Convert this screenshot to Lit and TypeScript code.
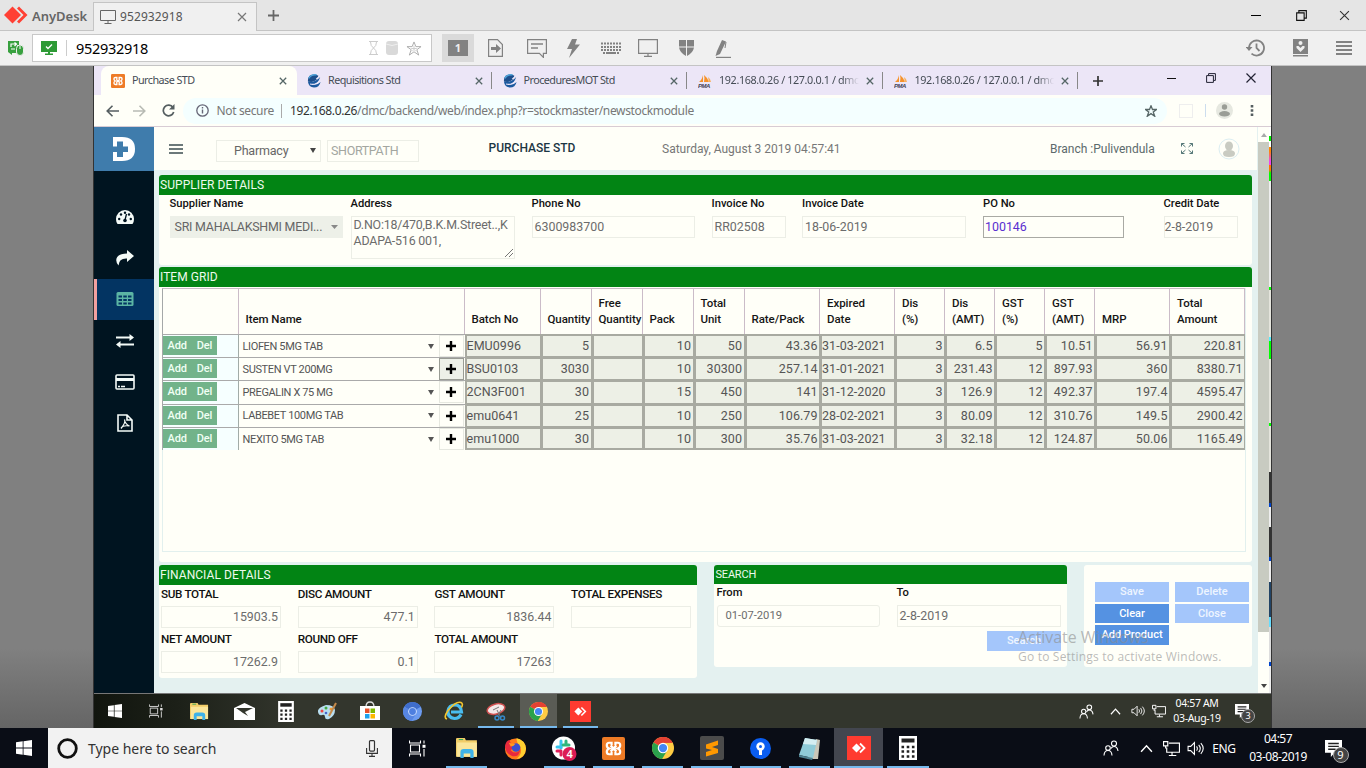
import { LitElement, html, svg, css } from "lit";
import { customElement } from "lit/decorators.js";
import { classMap } from "lit/directives/class-map.js";

const ico = (w: number, h: number, vb: string, body: unknown) =>
  html`<svg class="ico" width=${w} height=${h} viewBox=${vb} fill="none">${body}</svg>`;

const cross = (s = 8, c = "#566", w = 1.6) =>
  ico(s, s, "0 0 10 10", svg`<path d="M1 1l8 8M9 1l-8 8" stroke=${c} stroke-width=${w} />`);
const plus = (s: number, c: string, w: number) =>
  ico(s, s, "0 0 10 10", svg`<path d="M5 0v10M0 5h10" stroke=${c} stroke-width=${w} />`);
const restore = (s: number) =>
  ico(s, s, "0 0 10 10", svg`<path d="M.6 2.6h6.8v6.8H.6zM2.6 2.4V.6h6.8v6.8H7.6" stroke="#111" stroke-width="1" />`);
const minimise = ico(10, 10, "0 0 10 10", svg`<path d="M0 5.5h10" stroke="#000" />`);
const winLogo = (s: number) =>
  ico(s, s, "0 0 16 16", svg`<path d="M0 2.3 6.7 1.3V7.6H0zM7.5 1.2 16 0V7.6H7.5zM0 8.4H6.7V14.7L0 13.7zM7.5 8.4H16V16L7.5 14.8z" fill="#fff" />`);
const taskView = (s: number, c = "#fff") =>
  ico(s, s, "0 0 17 16", svg`<path d="M.5 0v2.5h11V0M.5 16v-2.5h11V16M1.5 4.5h9v7h-9zM15 0v3M15 8.5V16" stroke=${c} stroke-width="1.1" /><path d="M13.5 4.3h3v3h-3z" fill=${c} />`);
const folder = (w: number) =>
  ico(w, w, "0 0 20 20", svg`<path d="M0 2q0-1 1-1h7l1 2h10v15H0z" fill="#f2cd68" /><path d="M1 5h18v13H1z" fill="#fbe69a" /><path d="M2.5 2.3h4" stroke="#3aa857" stroke-width="1" /><path d="M4 19v-5q0-3 3-3h6q3 0 3 3v5h-3v-4H7v4z" fill="#3fb2e8" />`);
const calc = (w: number, h: number) =>
  ico(w, h, "0 0 18 24", svg`<path d="M0 0h18v24H0z" fill="#fff" /><path d="M2.5 2.5h13v4h-13z" fill="#222" /><path d="M2.5 11h13M2.5 15.5h13M2.5 20.500h13" stroke="#222" stroke-width="2.6" stroke-dasharray="2.6 2.6" />`);
const chrome = (s: number) =>
  ico(s, s, "0 0 24 24", svg`<circle cx="12" cy="12" r="12" fill="#fc4" /><path d="M12 12 1.600 6A12 12 0 0 1 22.400 6z" fill="#e34133" /><path d="M12 12 1.600 6A12 12 0 0 0 11 24l5.500-9z" fill="#2ba24c" /><path d="M12 6.300h10.500L23 9 14 17z" fill="#fc4" /><path d="M12 0A12 12 0 0 1 22.500 6.300H12z" fill="#e34133" /><circle cx="12" cy="12" r="5.700" fill="#fff" /><circle cx="12" cy="12" r="4.500" fill="#4487f4" />`);
const chromium = ico(19, 19, "0 0 24 24", svg`<circle cx="12" cy="12" r="12" fill="#6c9bf0" /><path d="M12 12 1.600 6A12 12 0 0 1 22.400 6z" fill="#3f6dcc" /><path d="M12 12 1.600 6A12 12 0 0 0 11 24l5.500-9z" fill="#5786e2" /><circle cx="12" cy="12" r="5.500" fill="#cfe0ff" /><circle cx="12" cy="12" r="4.300" fill="#4e7fe0" />`);
const anydesk = (s: number) =>
  ico(s, s, "0 0 24 24", svg`<path d="M0 0h24v24H0z" fill="#ff3b30" /><path d="M5 12l4.500-4.500L14 12l-4.500 4.500z" fill="#fff" /><path d="M13 7.500l4.500 4.500-4.500 4.500" stroke="#fff" stroke-width="1.800" />`);
const xampp = (s: number) =>
  ico(s, s, "0 0 24 24", svg`<rect width="24" height="24" rx="2" fill="#ee7b26" /><path d="M10 8.500V6H7.500Q5 6 5 8.500T7.500 12Q5 13 5 15.500T7.500 18H10v-2.500M14 8.500V6h2.500Q19 6 19 8.500T16.500 12Q19 13 19 15.500T16.500 18H14v-2.500M9 9l6 6M15 9l-6 6" stroke="#fff" stroke-width="2.300" />`);
const people = (s: number) =>
  ico(s, s, "0 0 16 16", svg`<circle cx="11" cy="3.500" r="2.500" stroke="#fff" stroke-width="1.100" /><circle cx="5" cy="8" r="2.300" stroke="#fff" stroke-width="1.100" /><path d="M8 8.500Q9 6.500 11 6.500q3.300 0 4 4.500M1 15.500q.3-5 4-5t4 5" stroke="#fff" stroke-width="1.100" />`);
const chevron = (s: number) => ico(s, s, "0 0 12 12", svg`<path d="M1 9l5-5.500L11 9" stroke="#fff" stroke-width="1.300" />`);
const speaker = (s: number) =>
  ico(s, s, "0 0 16 16", svg`<path d="M1 6h2.500L7 2.500v11L3.500 10H1zM9 6q1.500 2 0 4M11 4.500q3 3.500 0 7M13 3q4.500 5 0 10" stroke="#fff" stroke-width="1" />`);
const network = (s: number) =>
  ico(s, s, "0 0 16 16", svg`<path d="M5.500 3H15.500V11.500H3.500V7M8.500 12v2.500M5.500 14.600h7" stroke="#fff" stroke-width="1.100" /><path d="M.5 1.500h4v4h-4zM2.500 5.500V8" stroke="#fff" stroke-width="1.100" />`);
const note = (s: number) =>
  ico(s, s, "0 0 16 16", svg`<path d="M0 0h16v12H9l-3.500 4v-4H0z" fill="#fff" /><path d="M3 3.300h10M3 6h10M3 8.700h7" stroke="#222" stroke-width="1.200" />`);
const swirl = ico(14, 14, "0 0 16 16", svg`<path d="M3 2q5-3 10 0-1 6-8 7-4 0-4-1Q1 4 3 2z" fill="#1d4f8c" /><path d="M2 5Q5 0 11 1" stroke="#4fa3d8" stroke-width="1.600" /><path d="M10 5.500l5-4.500v6z" fill="#ece6f7" /><path d="M1 8.500q8 2 14-5-2 8-9 8.500 5 1.500 9.500-3Q14 15.500 8 15.500 2 15 1 8.500z" fill="#1c5a9f" /><path d="M3.500 11.500q7 1.500 11-3.500" stroke="#ece6f7" stroke-width="1.300" />`);
const pma = ico(14, 14, "0 0 14 14", svg`<path d="M5 8V1q-1 5-4 7zM6 8q1-4 0-7 4 3 5 7z" fill="#f6922a" /><path d="M10 8q1-2 0-5 3 2 3 5z" fill="#f8b15e" /><text x="0" y="13.500" class="pma">PMA</text>`);
const plug = (d: unknown) => ico(18, 18, "0 0 18 18", d);

const fields = [
  ["Supplier Name", "SRI MAHALAKSHMI MEDI...", "pick"],
  ["Address", "", "area"],
  ["Phone No", "6300983700", "w163"],
  ["Invoice No", "RR02508", "w73"],
  ["Invoice Date", "18-06-2019", "w164"],
  ["PO No", "100146", "po"],
  ["Credit Date", "2-8-2019", "w73 tight"],
];
const heads = ["", "Item Name", "Batch No", "Quantity", "Free\nQuantity", "Pack", "Total\nUnit", "Rate/Pack", "Expired\nDate", "Dis\n(%)", "Dis\n(AMT)", "GST\n(%)", "GST\n(AMT)", "MRP", "Total\nAmount"];
const rows = [
  ["LIOFEN 5MG TAB", "EMU0996", "5", "", "10", "50", "43.36", "31-03-2021", "3", "6.5", "5", "10.51", "56.91", "220.81"],
  ["SUSTEN VT 200MG", "BSU0103", "3030", "", "10", "30300", "257.14", "31-01-2021", "3", "231.43", "12", "897.93", "360", "8380.71"],
  ["PREGALIN X 75 MG", "2CN3F001", "30", "", "15", "450", "141", "31-12-2020", "3", "126.9", "12", "492.37", "197.4", "4595.47"],
  ["LABEBET 100MG TAB", "emu0641", "25", "", "10", "250", "106.79", "28-02-2021", "3", "80.09", "12", "310.76", "149.5", "2900.42"],
  ["NEXITO 5MG TAB", "emu1000", "30", "", "10", "300", "35.76", "31-03-2021", "3", "32.18", "12", "124.87", "50.06", "1165.49"],
];
const money = [
  ["SUB TOTAL", "15903.5"], ["DISC AMOUNT", "477.1"], ["GST AMOUNT", "1836.44"], ["TOTAL EXPENSES", ""],
  ["NET AMOUNT", "17262.9"], ["ROUND OFF", "0.1"], ["TOTAL AMOUNT", "17263"],
];

@customElement("app-root")
export class AppRoot extends LitElement {
  static styles = css`
    :host { display: flex; flex-direction: column; width: 1366px; height: 768px; overflow: hidden; font-family: "Noto Sans", "Open Sans", sans-serif; color: #222; }
    * { box-sizing: border-box; }
    .ico { display: block; flex: none; }
    .pma { font: italic bold 6px "Liberation Sans", sans-serif; fill: #445; }
    .r { display: flex; align-items: center; white-space: nowrap; }
    .g { display: grid; align-items: center; white-space: nowrap; }
    .c { justify-self: center; }

    .title { height: 31px; background: #e5e5e5; border-bottom: 1px solid #c4c4c4; grid-template-columns: 30px 63px 164px 32px 942px 49px 42px 44px; flex: none; }
    .title > .ico { justify-self: center; }
    .title > .logo { margin-left: 1px; }
    .brand { font-weight: 600; font-size: 13px; color: #666; letter-spacing: -.02px; padding: 1px 0 0 2px; }
    .tab { align-self: end; height: 29px; margin-bottom: -1px; background: #f0f0f0; border: 1px solid #c4c4c4; border-bottom: 0; padding: 0 9px 1px 6px; font-size: 12px; letter-spacing: .1px; color: #555; gap: 4px; }
    .tab span { flex: 1; }
    .tools { height: 35px; background: #f0f0f0; border-bottom: 1px solid #c4c4c4; grid-template-columns: 32px 400px 10px 32px 43px 39px 35px 39px 36px 40px 34px 491px 48px 42px 45px; flex: none; }
    .tools > .ico { justify-self: center; }
    .addr { height: 28px; background: #fff; border: 1px solid #c8c8c8; padding: 0 9px 0 8px; gap: 8px; font-size: 14.500px; color: #000; letter-spacing: -.3px; }
    .addr b { width: 1px; height: 16px; background: #ccc; margin: 0 1px; }
    .addr span { flex: 1; }
    .one { height: 28px; background: #dadada; display: grid; place-items: center; }
    .one b { width: 20px; height: 16px; background: #828282; color: #eee; font-size: 11px; line-height: 16px; text-align: center; }

    .stage { height: 662px; flex: none; display: grid; grid-template-columns: 93px 1179px 94px; background: linear-gradient(#808080 88%, #656565); }
    .remote { grid-column: 2; border: solid #333; border-width: 0 1px; display: flex; flex-direction: column; overflow: hidden; }
    .tabs { height: 29px; background: #ece6f7; grid-template-columns: 7px 196px repeat(4, 195.500px) 38px 36px 38px 40px 40px; font-size: 10.800px; color: #454c55; flex: none; letter-spacing: -.55px; }
    .tabs > .ico { justify-self: center; }
    .tabs > .up { margin-bottom: 5px; }
    .bt { height: 29px; padding: 0 10px 0 10px; gap: 7px; }
    .bt.on { background: #fffff8; border-radius: 8px 8px 0 0; }
    .bt span { flex: 1; overflow: hidden; padding-bottom: 2px; }
    .bt:not(.on) b { width: 1px; height: 17px; background: #888; margin: 0 -9px 0 1px; }
    .bt.narrow span { max-width: 140px; letter-spacing: -.38px; -webkit-mask-image: linear-gradient(90deg, #000 88%, transparent); mask-image: linear-gradient(90deg, #000 88%, transparent); }
    .nav { height: 32px; background: #fffff8; border-bottom: 1px solid #d8ccd4; grid-template-columns: 5px 27px 27px 30px 984px 38px 6px 26px 30px; font-size: 12px; color: #777; flex: none; }
    .nav > .ico { justify-self: center; }
    .omni { height: 26px; border-radius: 13px; background: #f4ffff; padding: 0 10px 0 13px; gap: 7.500px; letter-spacing: -.36px; }
    .omni b { width: 1px; height: 14px; background: #aaa; }
    .omni .url { flex: 1; }
    .omni i { font-style: normal; color: #333; }
    .extbox { width: 14px; height: 14px; border: 1px solid #eee; justify-self: center; }
    .nsep { width: 1px; height: 13px; background: #cde; }

    .app { height: 566px; flex: none; display: grid; grid-template-columns: 60px 1104px 11px 2px; font-family: Roboto, sans-serif; background: #fffff8; }
    .side { background: #001420; display: flex; flex-direction: column; }
    .dlogo { height: 44px; background: #3f7cac; display: grid; place-items: center; margin-bottom: 25.500px; }
    .si { height: 41.200px; display: grid; place-items: center; padding-left: 2px; }
    .si.on { background: #033462; border-left: 3px solid #f2a0a0; padding: 0 1px 1px 0; }
    .scroll { display: flex; flex-direction: column; align-items: center; padding-top: 6px; }
    .thumb { width: 11px; height: 490px; background: #c8cbc1; margin: 4px 0 52px; }
    .noise { background: linear-gradient(#fff 0 9px, #0e0 9px 14px, #fff 14px 20px, #f80 20px 24px, #e4e 34px 38px, #f70 38px 43px, #0f0 46px 54px, #eee 54px 160px, #0f0 160px 163px, #e4e4dc 163px 210px, #5ef 210px 214px, #0f0 214px 232px, #e4e4dc 232px 296px, #0f0 296px 299px, #e4e4dc 299px 345px, #333 345px 376px, #04c 376px 380px, #eee 380px 400px, #333 400px 430px, #04c 430px 434px, #eee 434px 455px, #246 455px 490px, #6df 490px 500px, #ddd 500px 535px, #04c 535px 539px, #eee 539px); }
    .main { background: #e4f1f0; display: flex; flex-direction: column; padding-right: 1px; }
    .top { height: 43px; background: #fffff8; grid-template-columns: 62px 111px 160.500px 174.500px 388px 116.500px 41px 42.500px; font-size: 12px; color: #777; flex: none; }
    .top > .ico { justify-self: center; }
    .top > .menu { justify-self: start; margin-left: 15px; }
    .branch { color: #5c6a6c; }
    .bx { height: 22px; border: 1px solid #eceee6; margin-top: 4px; }
    .sel { width: 105px; padding: 0 4px 0 17px; justify-content: space-between; color: #666; font-size: 12.500px; letter-spacing: -.2px; }
    .short { width: 92px; padding-left: 3px; color: #a3a6a0; font-size: 12.500px; letter-spacing: -.35px; }
    .ttl { color: #1b3644; font-weight: 500; font-size: 12px; padding: 0 0 1px 1px; }
    .body { padding: 4.500px 5px 0 4.500px; display: flex; flex-direction: column; }
    .panel { background: #fffff8; border-radius: 3px; }
    .hd { height: 20.500px; line-height: 20px; background: #028414; color: #eefaee; font-size: 12px; padding-left: 1.500px; border-radius: 3px 3px 0 0; letter-spacing: .06px; }
    .sup { height: 90px; margin-bottom: 2px; }
    .fg { display: grid; grid-template-columns: 181px 181px 180px 90.500px 181px 180.500px 80px; padding-left: 11px; align-items: start; }
    label { display: block; font-size: 11.200px; font-weight: 500; color: #111; line-height: 14px; white-space: nowrap; }
    .fg label { margin: 1.500px 0 5px; }
    .in { height: 22px; border: 1px solid #eceee6; font-size: 12.400px; color: #6c6c6c; padding: 0 2px; line-height: 19.500px; }
    .w163 { width: 163px; } .w73 { width: 74px; } .w164 { width: 164px; }
    .w73.tight { padding: 0; }
    .po { width: 141px; border-color: #a9aaa4; color: #5a2fd0; padding-left: 1px; }
    .pick { width: 173px; background: #edf0e8; border: 0; padding: 0 5px; display: flex; align-items: center; justify-content: space-between; color: #666; letter-spacing: -.22px; }
    .area { width: 164px; height: 43px; line-height: 16.800px; position: relative; letter-spacing: -.18px; white-space: pre; }
    .area .ico { position: absolute; right: 1px; bottom: 1px; }
    .grid { height: 295.500px; margin-bottom: 2.500px; }
    .tb { margin: 1px 0 0 3px; width: 1084px; height: 263.500px; border: 1px solid #e2f0ee; border-top: 0; }
    .tr { display: grid; grid-template-columns: 76px 226px 76px 51px 51px 51px 51px 75.500px 75px 50px 50px 50px 50px 75px 75px; }
    .th { height: 46px; border-top: 1px solid #c8bcc6; border-left: 1px solid #a5a8a8; align-items: stretch; margin-left: -1px; width: 1083.500px; }
    .th div { border-right: 1px solid #cbbcc8; font-size: 11.500px; font-weight: 500; color: #161616; white-space: pre; line-height: 15.700px; padding: 0 0 6.500px 7px; display: flex; align-items: flex-end; letter-spacing: -.05px; }
    .td { height: 23.200px; border-left: 1px solid #a5a8a8; margin-left: -1px; width: 1083.500px; }
    .lead { border-top: 1px solid #aaa; border-right: 1px solid #a2aca8; background: #f6ffff; padding-top: 1px; display: flex; }
    .ad { height: 19px; width: 54px; background: #72b38a; color: #f0fff4; font-size: 11px; font-weight: 500; line-height: 19px; padding-left: 5px; display: flex; gap: 10px; letter-spacing: -.15px; }
    .item { border-top: 1px solid #aaa; font-size: 11px; letter-spacing: -.36px; color: #555; display: grid; grid-template-columns: 1fr 13px 25px; align-items: center; padding: 0 1px 0 4px; }
    .item .ico { justify-self: center; }
    .item > .ico { justify-self: start; margin-left: 2px; }
    .pl { height: 22px; display: grid; place-items: center; border: 1px solid #e6e8e0; }
    .pl.f { background: #edf0e8; border-color: #999c94; }
    .cell { background: #edf0e6; border: solid #a8aaa1; border-width: 2px 1px 1px 2px; font-size: 12.500px; line-height: 19.500px; color: #555; text-align: right; padding-right: 1.500px; letter-spacing: .05px; }
    .cell.l { text-align: left; padding-left: 0; }
    .td:last-child .cell { border-bottom-width: 2px; }
    .low { display: grid; grid-template-columns: 538.500px 353px 168px; gap: 17px; align-items: start; }
    .fin { height: 113px; }
    .fin .fl { display: grid; grid-template-columns: repeat(3, 136.700px) 120px; padding-left: 2.500px; }
    .fin label { margin: 2px 0 5px; font-size: 11.700px; letter-spacing: -.32px; }
    .fin .in { width: 120px; text-align: right; margin-bottom: 2px; }
    .srch { height: 102px; }
    .srch .hd { height: 19px; font-size: 11px; line-height: 19px; letter-spacing: -.2px; }
    .srch .fl { display: grid; grid-template-columns: 180px 164px; padding-left: 2.500px; }
    .srch label { margin: 2px 0 5.500px; }
    .srch .in { width: 164px; }
    .srch .in.sm { font-size: 11.200px; padding-left: 8px; border-radius: 3px; width: 163px; }
    .btn { height: 19.500px; width: 74px; background: #a4c6fb; color: #eef5ff; font-size: 11px; font-weight: 500; line-height: 19px; text-align: center; white-space: nowrap; }
    .btn.dk { background: #5592e2; color: #fff; }
    .srch .btn { margin: 4px 0 0 273px; }
    .acts { height: 102px; display: grid; grid-template-columns: 74px 74px; gap: 2px 6px; align-content: start; padding: 17.500px 0 0 11px; }
    .wm { position: absolute; left: 1018px; top: 626px; color: #8c8c8c99; font: 15.900px/23px "Open Sans", sans-serif; }
    .wm p { margin: 0; font-size: 12px; line-height: 15px; letter-spacing: .2px; }

    .rtask { height: 35px; background: linear-gradient(90deg, #11150e 0, #1c2018 7%, #33362d 17%); border-top: 1px solid #777; grid-template-columns: 41px 41px 47px 42px 42px 42px 42px 42px 42px 42px 43px 41px 468px 34px 25px 20px 22px 54px 36px; flex: none; color: #fff; font-size: 10.500px; }
    .slot { height: 100%; display: grid; place-items: center; }
    .slot.u { border-bottom: 2px solid #76b9ed; padding-top: 2px; margin: 0 3px; }
    .slot.sel2 { background: #5a5c55; }
    .clock { text-align: center; line-height: 15px; letter-spacing: -.35px; }
    .nt { justify-self: center; position: relative; }
    .badge { position: absolute; left: 6px; top: 5px; width: 14px; height: 14px; border-radius: 50%; background: #444; border: 1px solid #aaa; color: #fff; font-size: 9px; line-height: 12px; text-align: center; letter-spacing: 0; }
    .htask { height: 40px; background: #0a0d16; color: #fff; grid-template-columns: 48px 344px 50px repeat(9, 49px) 50px 157px 42px 28px 22px 26px 32px 76px 34px; font-size: 12px; flex: 1; }
    .htask .slot.u { margin: 0 4px; }
    .htask .slot.sel2 { background: #43464f; margin: 0; }
    .htask .clock { line-height: 18.500px; letter-spacing: -.5px; }
    .htask .badge { width: 16px; height: 16px; line-height: 14px; font-size: 11px; top: 7px; left: 8px; }
    .eng { letter-spacing: -.4px; }
    .find { height: 40px; background: #f2f2f2; color: #333; font-size: 14px; letter-spacing: -.03px; padding: 0 14px 0 9px; gap: 10px; }
    .find span { flex: 1; }
  `;

  private header() {
    return html`
      <div class="g title">
        <svg class="ico logo" width="24" height="18" viewBox="0 0 24 18"><path d="M0 9l8.500-8.500L17 9l-8.500 8.500z" fill="#ff4034" /><path d="M13 2.500l2-2L23.500 9 15 17.500l-2-2L19.500 9z" fill="#ff4034" /></svg>
        <div class="brand">AnyDesk</div>
        <div class="r tab">${ico(16, 14, "0 0 16 14", svg`<path d="M.5.5h15v10H.5zM8 10.500V13M4.500 13.500h7" stroke="#666" />`)}<span>952932918</span>${cross(10, "#777", 1.2)}</div>
        ${plus(11, "#666", 1.6)}<i></i>${minimise}${restore(11)}${cross(11, "#333", 1)}
      </div>
      <div class="g tools">
        ${ico(16, 16, "0 0 16 16", svg`<path d="M0 1h11v4H9v8H4v2l-4-3z" fill="#38a03f" /><path d="M3 7V4h5M6.500 2.500 8.500 4l-2 2M3 9h4" stroke="#fff" stroke-width="1.200" /><rect x="8.500" y="5" width="7" height="10.500" rx="3.500" fill="#38a03f" stroke="#eee" /><path d="M12 6v3" stroke="#fff" />`)}
        <div class="r addr">${ico(16, 14, "0 0 16 14", svg`<path d="M0 0h16v11H9v1.500h3V14H4v-1.500h3V11H0z" fill="#2d9a35" /><path d="M5 5.500 7 7.500l4-4" stroke="#fff" stroke-width="1.300" />`)}<b></b><span>952932918</span>
          ${ico(9, 14, "0 0 9 14", svg`<path d="M0 .5h9M0 13.500h9M1.500 1q0 4 3 6 3-2 3-6M1.500 13q0-4 3-6 3 2 3 6" stroke="#ccc" />`)}
          ${ico(12, 14, "0 0 12 14", svg`<rect width="12" height="14" rx="3" fill="#d9d9d9" /><path d="M0 3q6 3 12 0" stroke="#eee" />`)}
          ${ico(16, 15, "0 0 16 16", svg`<path d="M8 1l2 5h5.500L11 9.300l2 5.700-5-3.500L3 15l2-5.700L.5 6H6z" stroke="#aaa" /><path d="M8 5v4M5 8h6M6 11l2-2 2 2" stroke="#ccc" />`)}
        </div><i></i>
        <div class="one"><b>1</b></div>
        ${ico(15, 18, "0 0 15 18", svg`<path d="M.6.600H9.500L14.400 5.500V17.400H.6z" stroke="#828282" stroke-width="1.200" /><path d="M3 8h5V5l5 4.500-5 4.500v-3H3z" fill="#828282" />`)}
        ${ico(20, 19, "0 0 20 19", svg`<path d="M.6.600h18.800v13.800h-3v4l-4-4H.6z" stroke="#828282" stroke-width="1.200" /><path d="M4 5h12M4 9h7" stroke="#828282" stroke-width="1.400" />`)}
        ${ico(13, 19, "0 0 13 19", svg`<path d="M5 0h5L8 5.500h5L2 19l3-9H0z" fill="#828282" />`)}
        ${ico(20, 12, "0 0 20 12", svg`<path d="M0 1.500h20M0 5h20M0 8h20" stroke="#828282" stroke-width="2" stroke-dasharray="2 1" /><path d="M2 11h2M5 11h10M16 11h2" stroke="#828282" stroke-width="1.800" />`)}
        ${ico(20, 18, "0 0 20 18", svg`<path d="M.6.600h18.800v13.800H.6zM10 14.500V17M6 17.400h8" stroke="#828282" stroke-width="1.200" />`)}
        ${ico(15, 16, "0 0 15 16", svg`<path d="M0 0h7v6.500H0zM8 0h7v6.500H8zM0 7.500h7V16Q1 13 0 7.500zM8 7.500h7Q14 13 8 16z" fill="#828282" />`)}
        ${ico(16, 19, "0 0 16 19", svg`<path d="M1 18.400h15" stroke="#828282" stroke-width="1.200" /><path d="M7 1l4 1.500L5 15l-4.500 2L2 12z" fill="#828282" /><path d="M11 3l-1 6" stroke="#828282" />`)}<i></i>
        ${ico(19, 18, "0 0 19 18", svg`<path d="M3 9a7.500 7.500 0 1 1 2.500 5.600M10.500 4.500V9l3 3" stroke="#828282" stroke-width="1.800" /><path d="M-.5 8h7L3 12z" fill="#828282" />`)}
        ${ico(15, 18, "0 0 15 18", svg`<path d="M0 0h15v15H0zM0 16h15v1.500H0z" fill="#828282" /><circle cx="7.500" cy="4" r="2" fill="#f0f0f0" /><path d="M3.500 7h2l2 2 2-2h2v2l-4 4-4-4z" fill="#f0f0f0" />`)}
        ${ico(16, 14, "0 0 16 14", svg`<path d="M0 1h16M0 5h16M0 9h16M0 13h16" stroke="#828282" stroke-width="1.900" />`)}
      </div>`;
  }

  private browser() {
    const tabs: [unknown, string, boolean][] = [
      [swirl, "Requisitions Std", false], [swirl, "ProceduresMOT Std", false],
      [pma, "192.168.0.26 / 127.0.0.1 / dmc |", true], [pma, "192.168.0.26 / 127.0.0.1 / dmc /", true],
    ];
    return html`
      <div class="g tabs"><i></i>
        <div class="r bt on">${xampp(14)}<span>Purchase STD</span>${cross()}</div>
        ${tabs.map(([i, t, n]) => html`<div class=${classMap({ r: true, bt: true, narrow: n })}>${i}<span>${t}</span>${cross()}<b></b></div>`)}
        ${plus(10, "#333", 1.7)}<i></i>
        <svg class="ico up" width="10" height="10"><path d="M0 5.500h9" stroke="#111" /></svg>
        <svg class="ico up" width="10" height="10" viewBox="0 0 10 10" fill="none"><path d="M.6 2.600h6.800v6.800H.6zM2.600 2.400V.600h6.800v6.800H7.600" stroke="#223" /></svg>
        <svg class="ico up" width="10" height="10" viewBox="0 0 10 10"><path d="M.5.500l9 9M9.500.500l-9 9" stroke="#223" stroke-width="1.200" /></svg>
      </div>
      <div class="g nav"><i></i>
        ${ico(13, 12, "0 0 13 12", svg`<path d="M13 6H1.500M6.500.700 1.200 6l5.300 5.300" stroke="#555e60" stroke-width="1.600" />`)}
        ${ico(13, 12, "0 0 13 12", svg`<path d="M0 6h11.500M6.500.700 11.800 6l-5.300 5.300" stroke="#b8bbb4" stroke-width="1.600" />`)}
        ${ico(13, 13, "0 0 13 13", svg`<path d="M11 3.500A5.300 5.300 0 1 0 11.700 8" stroke="#555e60" stroke-width="1.700" /><path d="M12.500 0v5.500H7z" fill="#555e60" />`)}
        <div class="r omni">
          ${ico(13, 13, "0 0 13 13", svg`<circle cx="6.500" cy="6.500" r="5.700" stroke="#667" stroke-width="1.300" /><path d="M6.500 5.500v4M6.500 3v1.500" stroke="#667" stroke-width="1.400" />`)}
          <span>Not secure</span><b></b><span class="url"><i>192.168.0.26</i>/dmc/backend/web/index.php?r=stockmaster/newstockmodule</span>
          ${ico(12, 12, "0 0 16 16", svg`<path d="M8 1l2 5h5.500L11 9.300l2 5.700-5-3.500L3 15l2-5.700L.5 6H6z" stroke="#566" stroke-width="1.700" />`)}
        </div>
        <div class="extbox"></div><div class="nsep"></div>
        ${ico(17, 17, "0 0 17 17", svg`<circle cx="8.500" cy="8.500" r="8.500" fill="#e6e8e0" /><circle cx="8.500" cy="5" r="2.700" fill="#9a9d96" /><ellipse cx="8.500" cy="11.800" rx="5.500" ry="2.700" fill="#9a9d96" />`)}
        ${ico(4, 13, "0 0 4 13", svg`<path d="M.7 1h2.600v2.400H.7zM.7 5.300h2.600v2.400H.7zM.7 9.600h2.600V12H.7z" fill="#555e60" />`)}
      </div>`;
  }

  private sidebar() {
    const w = "#f4fbf8";
    const icons = [
      plug(svg`<path d="M0 11a9 9 0 0 1 18 0q0 3-1.500 5h-15Q0 14 0 11z" fill=${w} /><g fill="#001420"><circle cx="3.200" cy="11" r="1.200" /><circle cx="5" cy="6.500" r="1.200" /><circle cx="9" cy="4.800" r="1.200" /><circle cx="13" cy="6.500" r="1.200" /><circle cx="14.800" cy="11" r="1.200" /><circle cx="9" cy="12.500" r="1.800" /></g><path d="M9 12l1.500-6" stroke="#001420" stroke-width="1.300" />`),
      plug(svg`<path d="M11 1l7 6-7 6V9.500Q3 9 2.500 16.500-.5 13 .5 9.500 2 4.500 11 4.500z" fill=${w} />`),
      plug(svg`<rect x="0.500" y="2" width="17" height="14" rx="1.500" fill="#5cb5a4" /><path d="M2.500 5.500h3.500v2H2.500zM7.300 5.500h3.500v2H7.300zM12 5.500h3.500v2H12zM2.500 9h3.500v2H2.500zM7.300 9h3.500v2H7.300zM12 9h3.500v2H12zM2.500 12.500h3.500v2H2.500zM7.300 12.500h3.500v2H7.300zM12 12.500h3.500v2H12z" fill="#033462" />`),
      plug(svg`<path d="M0 5.500h14M4 12.500h14" stroke=${w} stroke-width="2.200" /><path d="M13.500 2v7L18 5.500zM4.500 9v7L0 12.500z" fill=${w} />`),
      ico(20, 16, "0 0 20 16", svg`<rect x="1" y="1" width="18" height="14" rx="1" stroke=${w} stroke-width="1.600" /><path d="M1 5.500h18" stroke=${w} stroke-width="3" /><path d="M3 12.500h2M6 12.500h4" stroke=${w} stroke-width="1.300" />`),
      ico(16, 18, "0 0 16 18", svg`<path d="M1 1h9l5 5v11H1zM10 1v5h5" stroke=${w} stroke-width="1.600" /><path d="M7.500 5.500q1.500 3-3.500 9M4 14q2-3 8.500-2Q8 10 7.500 5.500" stroke=${w} stroke-width="1.200" />`),
    ];
    return html`<div class="side">
      <div class="dlogo">${ico(24, 26, "0 0 24 26", svg`<path d="M1 1h9q13 0 13 12T10 25H1z" fill="#fff" /><path d="M0 10.500h5V5.500h6v5h5v5.500h-5v5H5v-5H0z" fill="#3f7cac" />`)}</div>
      ${icons.map((i, n) => html`<div class="si ${n === 2 ? "on" : ""}">${i}</div>`)}
    </div>`;
  }

  private topbar() {
    return html`<div class="g top">
      <svg class="ico menu" width="14" height="10" viewBox="0 0 14 10"><path d="M0 1h14M0 5h14M0 9h14" stroke="#3c4e50" stroke-width="1.500" /></svg>
      <div class="r bx sel">Pharmacy${ico(6, 5, "0 0 6 5", svg`<path d="M0 0h6L3 5z" fill="#444" />`)}</div>
      <div class="r bx short">SHORTPATH</div>
      <div class="ttl">PURCHASE STD</div>
      <div>Saturday, August 3 2019 04:57:41</div>
      <div class="branch">Branch :Pulivendula</div>
      ${ico(12, 11, "0 0 12 11", svg`<path d="M.5 3.500v-3h3M.5.500l4 3.500M8.500.500h3v3M11.500.500l-4 3.500M.5 7.500v3h3M.5 10.500 4.500 7M8.500 10.500h3v-3M11.500 10.500 7.500 7" stroke="#577" stroke-width="1" />`)}
      ${ico(22, 22, "0 0 22 22", svg`<circle cx="11" cy="11" r="10" stroke="#dceef2" /><ellipse cx="11" cy="8" rx="4" ry="4.500" fill="#c9cbc2" /><path d="M5 15.500Q5 12 11 12t6 3.500q0 3.500-6 3.500t-6-3.500z" fill="#c9cbc2" />`)}
    </div>`;
  }

  private field([l, v, k]: string[]) {
    const body = k === "area"
      ? html`D.NO:18/470,B.K.M.Street..,K<br />ADAPA-516 001,${ico(8, 8, "0 0 8 8", svg`<path d="M0 8l8-8M4 8l4-4" stroke="#777" />`)}`
      : k === "pick" ? html`${v}${ico(7, 4, "0 0 7 4", svg`<path d="M0 0h7L3.500 4z" fill="#888" />`)}` : v;
    return html`<div><label>${l}</label><div class="in ${k}">${body}</div></div>`;
  }

  private table() {
    return html`<div class="tb">
      <div class="tr th">${heads.map((h) => html`<div>${h}</div>`)}</div>
      ${rows.map((r, n) => html`<div class="tr td">
        <div class="lead"><div class="ad"><span>Add</span><span>Del</span></div></div>
        <div class="item">${r[0]}${ico(6, 5, "0 0 6 5", svg`<path d="M0 0h6L3 5z" fill="#555" />`)}<div class="pl ${n === 1 ? "f" : ""}">${plus(10, "#000", 2.4)}</div></div>
        ${r.slice(1).map((v, i) => html`<div class="cell ${i === 0 || i === 6 ? "l" : ""}">${v}</div>`)}
      </div>`)}
    </div>`;
  }

  private lower() {
    return html`<div class="low">
      <div class="panel fin"><div class="hd">FINANCIAL DETAILS</div>
        <div class="fl">${money.map(([l, v]) => html`<div><label>${l}</label><div class="in">${v}</div></div>`)}</div></div>
      <div class="panel srch"><div class="hd">SEARCH</div>
        <div class="fl"><div><label>From</label><div class="in sm">01-07-2019</div></div><div><label>To</label><div class="in">2-8-2019</div></div></div>
        <div class="btn">Search</div></div>
      <div class="panel acts"><div class="btn">Save</div><div class="btn">Delete</div><div class="btn dk">Clear</div><div class="btn">Close</div><div class="btn dk">Add Product</div></div>
    </div>`;
  }

  private remoteTaskbar() {
    return html`<div class="g rtask">
      <div class="slot">${winLogo(14)}</div><div class="slot">${taskView(14, "#ddd")}</div><div class="slot">${folder(19)}</div>
      <div class="slot">${ico(21, 17, "0 0 21 17", svg`<path d="M0 5l10.500-5L21 5v12H0z" fill="#fff" /><path d="M2 5h17l-8 4 3 4-5-3z" fill="#33362d" />`)}</div>
      <div class="slot">${calc(16, 21)}</div>
      <div class="slot">${ico(20, 20, "0 0 20 20", svg`<path d="M8 4Q16 4 17 9q0 6-6 9-4 1-4-2t-3-2-4-3 8-7z" fill="#b9def0" /><circle cx="4" cy="10" r="1.500" fill="#e44" /><circle cx="8" cy="7" r="1.500" fill="#4a4" /><circle cx="13" cy="8" r="1.500" fill="#e93" /><circle cx="8" cy="12" r="1.300" fill="#46c" /><path d="M11 15 18 2" stroke="#c58a4a" stroke-width="2" />`)}</div>
      <div class="slot">${ico(20, 20, "0 0 20 20", svg`<path d="M6 6Q6 1 10 1t4 5" stroke="#ddd" stroke-width="1.300" /><path d="M0 5h20v14H0z" fill="#fff" /><path d="M5 7.500h4.500v4.500H5z" fill="#e8512b" /><path d="M10.500 7.500H15v4.500h-4.500z" fill="#7eb900" /><path d="M5 13h4.500v4.500H5z" fill="#1fa2ef" /><path d="M10.500 13H15v4.500h-4.500z" fill="#fcb800" />`)}</div>
      <div class="slot">${chromium}</div>
      <div class="slot">${ico(20, 20, "0 0 20 20", svg`<path d="M17 13.500q-2 4-6.500 4-7-1-6.500-7.500Q5 4 11 4t6.500 7H7" stroke="#49bdf0" stroke-width="3.200" /><path d="M3 18Q-1 17 4 9.500 12 0 17 1.500q2.500 1 .5 5" stroke="#f4c52e" stroke-width="1.600" />`)}</div>
      <div class="slot u">${ico(20, 19, "0 0 20 19", svg`<ellipse cx="10" cy="7" rx="9" ry="5" transform="rotate(-15 10 7)" fill="#f4e8e8" stroke="#d05050" stroke-width="1.500" /><path d="M7 8l6-3M11 8l4 8M15 8l-4 7" stroke="#777" /><circle cx="11" cy="16" r="2" stroke="#3688c8" stroke-width="1.500" /><circle cx="16.500" cy="16" r="2" stroke="#3688c8" stroke-width="1.500" />`)}</div>
      <div class="slot u sel2">${chrome(19)}</div>
      <div class="slot u">${anydesk(21)}</div><i></i>
      <div class="c">${people(15)}</div><div class="c">${chevron(11)}</div><div class="c">${speaker(14)}</div><div class="c">${network(14)}</div>
      <div class="clock">04:57 AM<br />03-Aug-19</div>
      <div class="nt">${note(14)}<div class="badge">3</div></div>
    </div>`;
  }

  private hostTaskbar() {
    return html`<div class="g htask">
      <div class="slot">${winLogo(16)}</div>
      <div class="r find">${ico(21, 21, "0 0 21 21", svg`<circle cx="10.500" cy="10.500" r="8.800" stroke="#111" stroke-width="2.800" />`)}<span>Type here to search</span>${ico(12, 17, "0 0 12 17", svg`<rect x="3.500" y=".6" width="5" height="10.500" rx="1" stroke="#333" stroke-width="1.200" /><path d="M.6 8v5.400h10.800V8M6 13.500v3M3 16.400h6" stroke="#333" stroke-width="1.100" />`)}</div>
      <div class="slot">${taskView(17)}</div>
      <div class="slot u">${folder(22)}</div>
      <div class="slot">${ico(23, 23, "0 0 24 24", svg`<circle cx="12" cy="12.500" r="11" fill="#ff7a1c" /><path d="M13 1q9 2 10 11-1 10-10 11 7-5 4-13Q13 6 13 1z" fill="#ffcf30" /><path d="M1 10Q2 3 6 3q0 4 5 6l-4 5q6 5 10-1-1 8-8 7Q2 18 1 10z" fill="#e8293d" /><circle cx="12.500" cy="11" r="4.500" fill="#3b4fd0" /><path d="M5 6q3 1 7 1-2 3-5 3z" fill="#ff9a20" />`)}</div>
      <div class="slot u">${ico(25, 25, "0 0 25 25", svg`<circle cx="11.500" cy="12" r="11.500" fill="#fff" /><path d="M9 5v7" stroke="#36c5f0" stroke-width="3" stroke-linecap="round" /><path d="M11 9h6M14 5v4" stroke="#2eb67d" stroke-width="3" stroke-linecap="round" /><path d="M5 11h4" stroke="#36c5f0" stroke-width="3" stroke-linecap="round" /><path d="M9 15v4M5 15h3" stroke="#e01e5a" stroke-width="3" stroke-linecap="round" /><circle cx="17.500" cy="18" r="7" fill="#dc1c55" /><text x="14.500" y="22" font-size="11" font-weight="600" fill="#fff">4</text>`)}</div>
      <div class="slot u">${xampp(23)}</div>
      <div class="slot u">${chrome(22)}</div>
      <div class="slot u">${ico(24, 24, "0 0 24 24", svg`<rect width="24" height="24" rx="2" fill="#4b4b4b" /><path d="M6 8.500 18 4.500v4.500L12 11l6 2v4L6 20.500V16l6-2-6-1.500z" fill="#ff9800" />`)}</div>
      <div class="slot u">${ico(21, 21, "0 0 21 21", svg`<circle cx="10.500" cy="10.500" r="10.500" fill="#0a5df0" /><circle cx="10.500" cy="8.500" r="4.200" fill="#fff" /><path d="M9 11h3v6H9z" fill="#fff" /><circle cx="10.500" cy="8.500" r="1.500" fill="#0a5df0" />`)}</div>
      <div class="slot u">${ico(22, 23, "0 0 22 23", svg`<path d="M17 2l4 1-2 19H8z" fill="#c9c6b8" /><path d="M6 1l12 2-4 18L0 18z" fill="#8fcbd8" /><path d="M6 1l12 2-1 5L4 7z" fill="#d5eef2" /><path d="M0 18l14 3-1 2L0 20z" fill="#4d8090" />`)}</div>
      <div class="slot u sel2">${anydesk(24)}</div>
      <div class="slot u">${calc(18, 24)}</div><i></i>
      <div class="c">${people(16)}</div><div class="c">${chevron(13)}</div><div class="c">${network(17)}</div><div class="c">${speaker(17)}</div>
      <div class="c eng">ENG</div>
      <div class="clock">04:57<br />03-08-2019</div>
      <div class="nt">${note(17)}<div class="badge">9</div></div>
    </div>`;
  }

  render() {
    const tri = (d: string, c: string) => ico(6, 5, "0 0 6 5", svg`<path d=${d} fill=${c} />`);
    return html`${this.header()}
      <div class="stage"><div class="remote">
        ${this.browser()}
        <div class="app">${this.sidebar()}
          <div class="main">${this.topbar()}
            <div class="body">
              <div class="panel sup"><div class="hd">SUPPLIER DETAILS</div><div class="fg">${fields.map((f) => this.field(f))}</div></div>
              <div class="panel grid"><div class="hd">ITEM GRID</div>${this.table()}</div>
              ${this.lower()}
            </div>
          </div>
          <div class="scroll">${tri("M0 4h6L3 0z", "#aaa")}<div class="thumb"></div>${tri("M0 0h6L3 4z", "#444")}</div>
          <div class="noise"></div>
        </div>
        ${this.remoteTaskbar()}
      </div></div>
      ${this.hostTaskbar()}
      <div class="wm">Activate Windows<p>Go to Settings to activate Windows.</p></div>`;
  }
}
